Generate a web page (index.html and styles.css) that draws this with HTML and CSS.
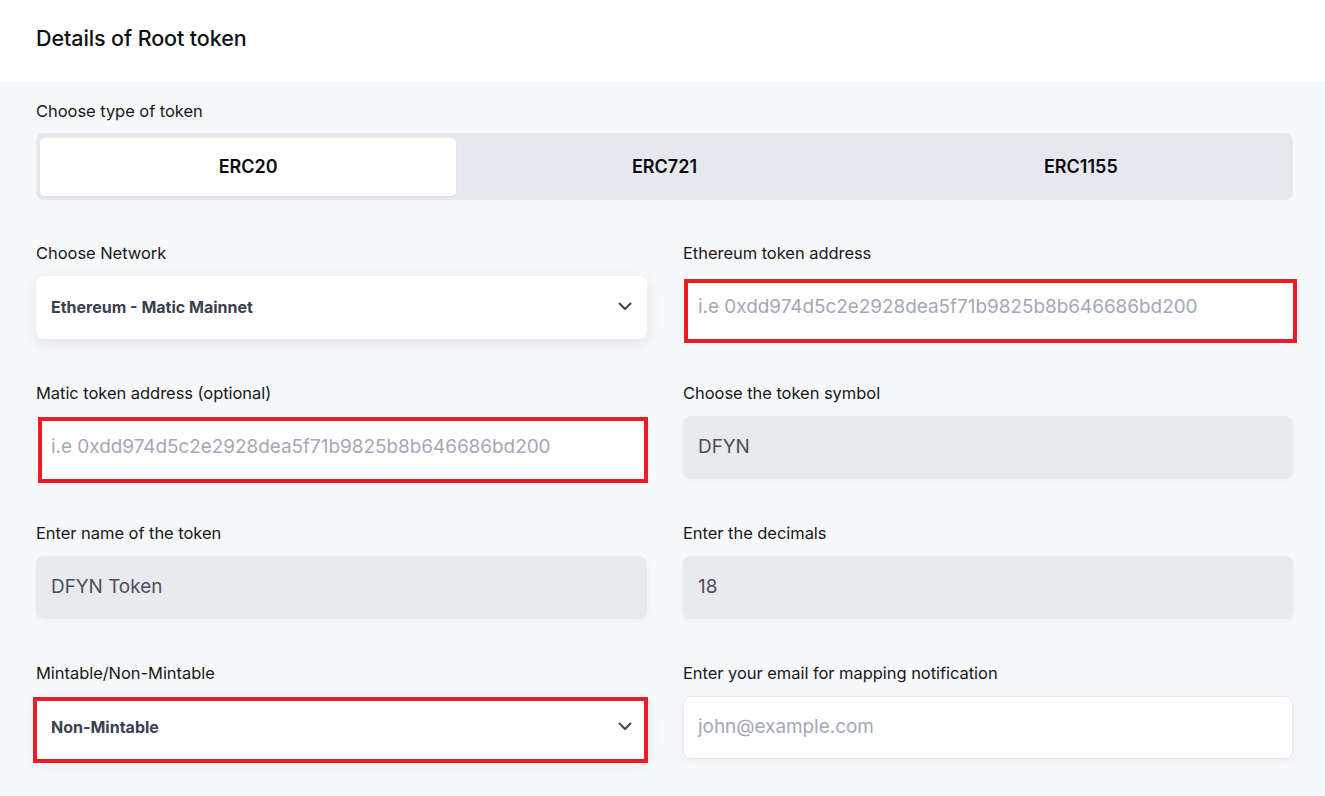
FILE: index.html
```html
<!DOCTYPE html>
<html lang="en">
<head>
<meta charset="utf-8">
<title>Details of Root token</title>
<link rel="stylesheet" href="styles.css">
</head>
<body>
<header class="header">
  <h1 class="title">Details of Root token</h1>
</header>
<main class="main">
  <div class="label">Choose type of token</div>
  <div class="tabs">
    <div class="tab active">ERC20</div>
    <div class="tab">ERC721</div>
    <div class="tab">ERC1155</div>
  </div>

  <div class="grid">
    <div class="cell">
      <div class="label">Choose Network</div>
      <div class="field select">
        <span>Ethereum - Matic Mainnet</span>
        <svg class="chev" width="14" height="9" viewBox="0 0 14 9"><path d="M1.5 1.5 L7 7 L12.5 1.5" fill="none" stroke="#3d4353" stroke-width="2" stroke-linecap="round" stroke-linejoin="round"/></svg>
      </div>
    </div>
    <div class="cell">
      <div class="label">Ethereum token address</div>
      <div class="field input">
        <span class="ph">i.e 0xdd974d5c2e2928dea5f71b9825b8b646686bd200</span>
        <div class="mark mark-eth"></div>
      </div>
    </div>

    <div class="cell">
      <div class="label">Matic token address (optional)</div>
      <div class="field input">
        <span class="ph">i.e 0xdd974d5c2e2928dea5f71b9825b8b646686bd200</span>
        <div class="mark mark-matic"></div>
      </div>
    </div>
    <div class="cell">
      <div class="label">Choose the token symbol</div>
      <div class="field disabled"><span>DFYN</span></div>
    </div>

    <div class="cell">
      <div class="label">Enter name of the token</div>
      <div class="field disabled"><span>DFYN Token</span></div>
    </div>
    <div class="cell">
      <div class="label">Enter the decimals</div>
      <div class="field disabled"><span>18</span></div>
    </div>

    <div class="cell">
      <div class="label">Mintable/Non-Mintable</div>
      <div class="field select">
        <span>Non-Mintable</span>
        <svg class="chev" width="14" height="9" viewBox="0 0 14 9"><path d="M1.5 1.5 L7 7 L12.5 1.5" fill="none" stroke="#3d4353" stroke-width="2" stroke-linecap="round" stroke-linejoin="round"/></svg>
        <div class="mark mark-mint"></div>
      </div>
    </div>
    <div class="cell">
      <div class="label">Enter your email for mapping notification</div>
      <div class="field input bordered">
        <span class="ph">john@example.com</span>
      </div>
    </div>
  </div>
</main>
</body>
</html>
```

FILE: styles.css
```css
html, body {
  margin: 0;
  padding: 0;
}
body {
  background: #f7f8fa;
  font-family: Inter, "Liberation Sans", sans-serif;
  color: #1b1b1f;
  width: 1325px;
  height: 796px;
  overflow: hidden;
}
.header {
  background: #ffffff;
  height: 81px;
  display: flex;
  align-items: center;
  padding-left: 36px;
  box-sizing: border-box;
}
.title {
  margin: 0 0 6px 0;
  font-family: Inter, "Open Sans", sans-serif;
  font-size: 21.5px;
  font-weight: 500;
  color: #0f1115;
  letter-spacing: -0.1px;
}
.main {
  padding: 20px 32px 0 36px;
}
.label {
  font-size: 16.5px;
  line-height: 20px;
  color: #16181d;
  height: 20px;
  letter-spacing: -0.05px;
}
.tabs {
  margin-top: 12px;
  background: #e7e8ed;
  border-radius: 8px;
  padding: 5px 4px 4px 4px;
  display: grid;
  grid-template-columns: 1fr 1fr 1fr;
  height: 67px;
  box-sizing: border-box;
}
.tab {
  display: flex;
  align-items: center;
  justify-content: center;
  font-family: Inter, "Open Sans", sans-serif;
  font-size: 18px;
  font-weight: 600;
  color: #0b0c10;
  border-radius: 5px;
  padding-bottom: 2px;
}
.tab.active {
  background: #ffffff;
  box-shadow: 0 1px 2px rgba(0, 0, 0, 0.05);
}
.grid {
  margin-top: 43px;
  display: grid;
  grid-template-columns: 611px 610px;
  column-gap: 36px;
  row-gap: 44px;
}
.cell {
  display: flex;
  flex-direction: column;
  gap: 13px;
}
.field {
  position: relative;
  height: 63px;
  border-radius: 8px;
  display: flex;
  align-items: center;
  padding: 0 15px 2px 15px;
  box-sizing: border-box;
}
.select {
  background: #ffffff;
  justify-content: space-between;
  box-shadow: 0 4px 14px rgba(30, 35, 50, 0.10);
  font-size: 16px;
  font-weight: 700;
  color: #3b4050;
}
.input {
  background: #ffffff;
  box-shadow: 0 2px 6px rgba(30, 35, 50, 0.05);
  font-size: 18.9px;
}
.bordered {
  border: 1px solid #e8e9ee;
  padding-left: 14px;
}
.ph {
  color: #a3a8b8;
}
.disabled {
  background: #e8eaed;
  font-size: 18.9px;
  color: #4a4f5d;
  box-shadow: 0 2px 6px rgba(30, 35, 50, 0.04);
}
.mark {
  position: absolute;
  border: 4px solid #ec1c24;
  pointer-events: none;
}
.mark-eth {
  left: 1px;
  top: 3px;
  right: -4px;
  bottom: -4px;
}
.mark-matic {
  left: 2px;
  top: 1px;
  right: -1px;
  bottom: -4px;
}
.mark-mint {
  left: -3px;
  top: 1px;
  right: -1px;
  bottom: -4px;
}
```
